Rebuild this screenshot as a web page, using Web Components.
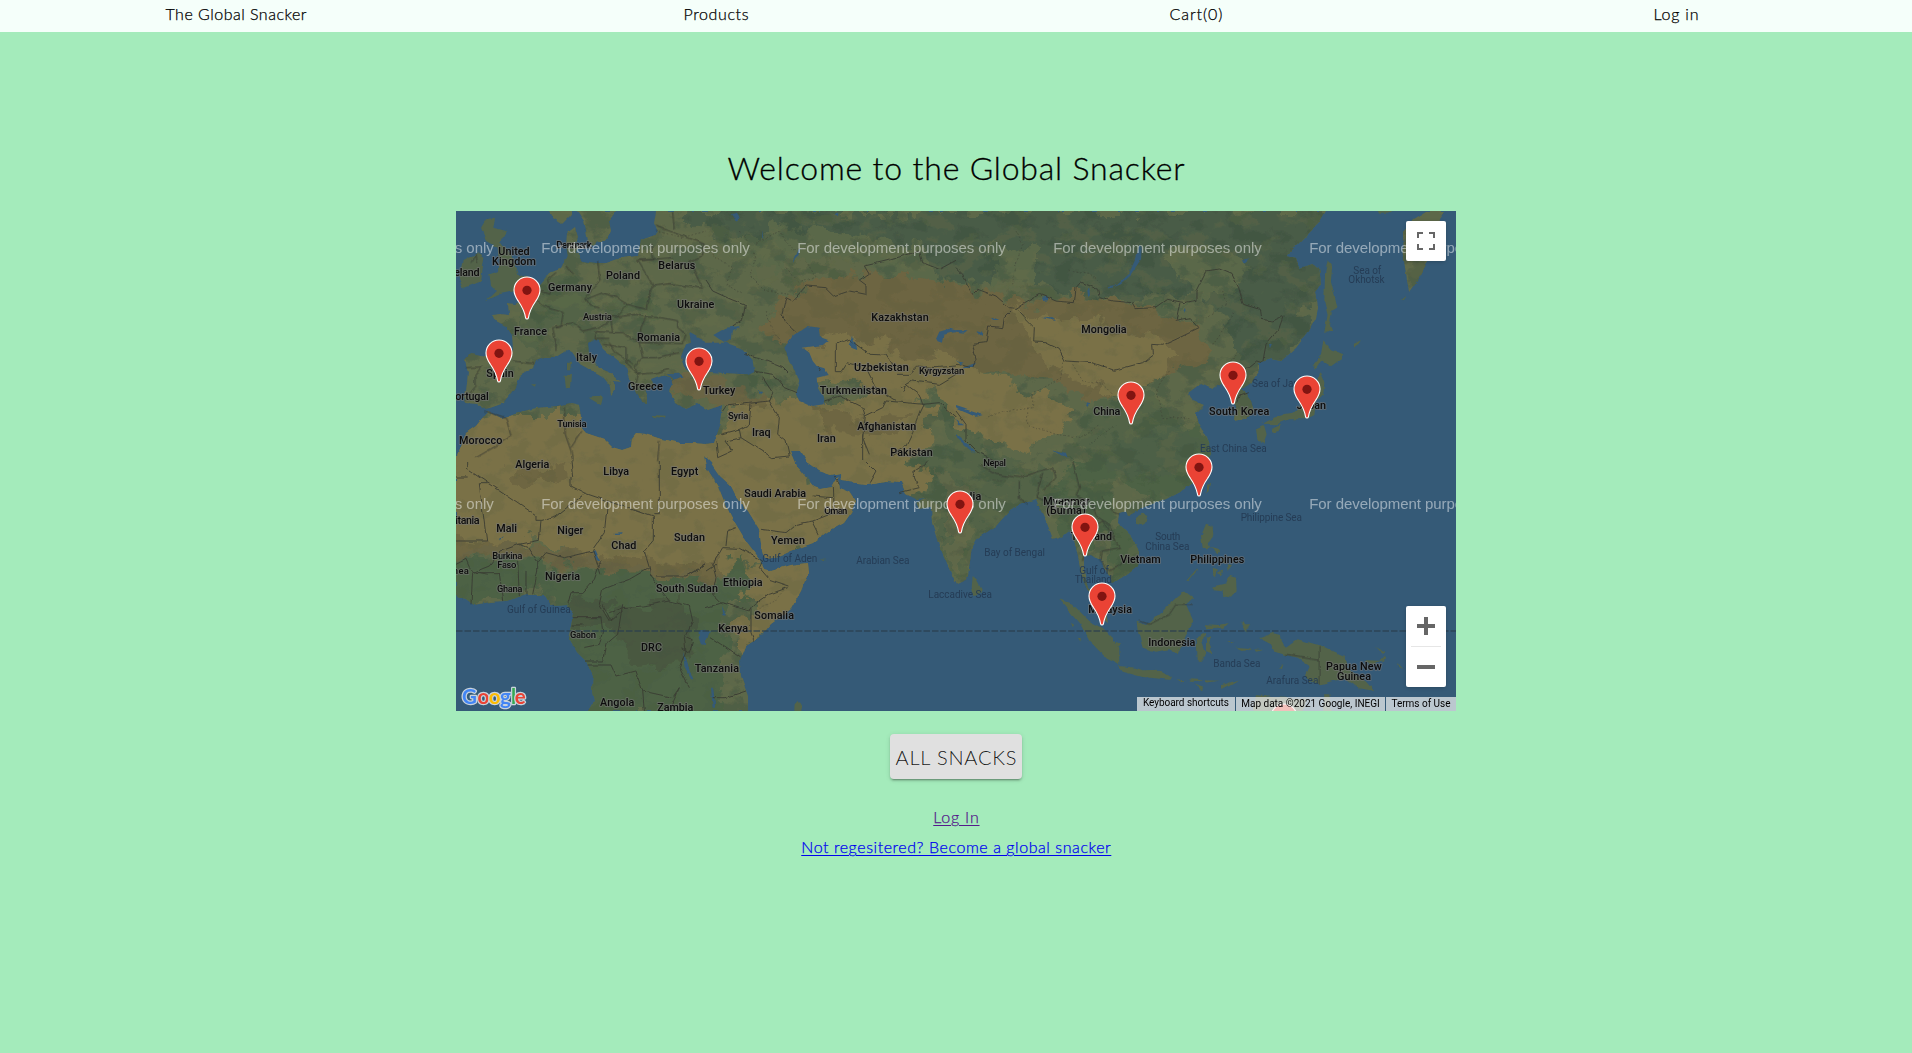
<!DOCTYPE html>
<html lang="en">
<head>
<meta charset="utf-8">
<title>The Global Snacker</title>
<style>
html,body{margin:0;height:100%;overflow:hidden}
body{background:#a4ebbb;font-family:Lato,"Open Sans",sans-serif;font-weight:300;font-size:16px;color:#000}
</style>
</head>
<body>
<snack-app></snack-app>
<script>
/* Text whose tracking is adjusted so that it spans the given width. */
customElements.define('fit-text', class extends HTMLElement {
  connectedCallback() {
    const root = this.attachShadow({mode: 'open'});
    root.innerHTML = '<style>:host{display:inline-block;white-space:nowrap}</style><span></span>';
    const span = root.querySelector('span');
    const text = this.getAttribute('text');
    span.textContent = text;
    const want = +this.getAttribute('span');
    const ls = (want - span.getBoundingClientRect().width) / (text.length - 1);
    span.style.letterSpacing = ls + 'px';
    span.style.marginRight = -ls + 'px';
  }
});

customElements.define('nav-bar', class extends HTMLElement {
  connectedCallback() {
    this.attachShadow({mode: 'open'}).innerHTML = `<style>
      :host{display:block;background:#f5fffa;height:32px;overflow:hidden;-webkit-text-stroke:.25px currentColor}
      nav{display:grid;grid-template-columns:repeat(4,480px);margin-left:-4px;justify-items:center;line-height:20px;padding-top:4px}
    </style><nav><slot></slot></nav>`;
  }
});

customElements.define('snack-button', class extends HTMLElement {
  connectedCallback() {
    this.attachShadow({mode: 'open'}).innerHTML = `<style>
      :host{display:block}
      button{display:flex;align-items:center;justify-content:center;width:132px;height:45px;border:0;padding:0;border-radius:4px;background:#e0e0e0;
        font:300 20px/24px Lato,sans-serif;color:rgba(0,0,0,.9);
        box-shadow:0 3px 1px -2px rgba(0,0,0,.2),0 2px 2px rgba(0,0,0,.14),0 1px 5px rgba(0,0,0,.12)}
    </style><button><slot></slot></button>`;
  }
});

customElements.define('map-pin', class extends HTMLElement {
  connectedCallback() {
    this.style.left = (this.getAttribute('x') - 14.3) + 'px';
    this.style.top = (this.getAttribute('y') - 43) + 'px';
    this.attachShadow({mode: 'open'}).innerHTML = `<style>:host{display:block;position:absolute;width:28px;height:44px}svg{display:block}</style>
      <svg width="28" height="44" viewBox="0 0 28 44"><path d="M14 1A13 13 0 0 0 1 14C1 19 3.200 22 5.500 25.500C9 30.500 11.300 34 12.600 41.800Q12.900 43 14 43Q15.100 43 15.400 41.800C16.700 34 19 30.500 22.500 25.500C24.800 22 27 19 27 14A13 13 0 0 0 14 1Z" fill="#ea4335" stroke="#fff" stroke-width="1.100"/><circle cx="14" cy="14.300" r="4.600" fill="#811411"/></svg>`;
  }
});

customElements.define('map-controls', class extends HTMLElement {
  connectedCallback() {
    this.attachShadow({mode: 'open'}).innerHTML = `<style>
      :host{position:absolute;inset:10px 10px 24px auto;display:flex;flex-direction:column;justify-content:space-between}
      div{background:#fff;border-radius:2px;box-shadow:0 1px 4px -1px rgba(0,0,0,.3);width:40px}
      svg{display:block}
    </style>
    <div><svg width="40" height="40" fill="none" stroke="#666" stroke-width="2"><path d="M12 17V12H17M23 12H28V17M28 23V28H23M17 28H12V23"/></svg></div>
    <div><svg width="40" height="81" fill="none" stroke="#666"><path d="M11 20H29M20 11V29M11 61H29" stroke-width="4"/><path d="M5 40.500H35" stroke="#e6e6e6"/></svg></div>`;
  }
});

customElements.define('map-attribution', class extends HTMLElement {
  connectedCallback() {
    this.attachShadow({mode: 'open'}).innerHTML = `<style>
      :host{position:absolute;right:0;bottom:0;display:flex;height:14px;width:319px;font:400 10px/14px Roboto,sans-serif;color:#000}
      div{background:rgba(245,245,245,.7);text-align:center;flex:none}
      div+div{margin-left:1px}
    </style>
    <div style="width:98px;line-height:12px"><fit-text text="Keyboard shortcuts" span="86"></fit-text></div>
    <div style="width:149px"><fit-text text="Map data ©2021 Google, INEGI" span="138.500"></fit-text></div>
    <div style="width:70px"><fit-text text="Terms of Use" span="59"></fit-text></div>`;
  }
});

/* Terrain, borders and place names. Sheets are 250-unit squares drawn at triple scale. */
const LAND = `M200 0L198 12 202 22 185 28 182 45 165 47 150 52 140 52 125 50 120 44 123 36 119 33 122 26 119 16 111 22 110 34 112 46 108 50 104 58 93 62 87 70 80 78 70 88 60 93 52 92 53 104 45 103 36 104 38 109 50 115 56 124 57 138 52 147 40 147 25 145 14 143 9 149 12 162 10 180 8 192 20 193 27 198 34 197 48 192 56 182 60 176 64 165 77 157 80 149 88 146 100 146 111 139 117 143 122 152 131 157 139 162 146 166 154 176 155 184 160 178 158 170 165 171 155 162 143 157 133 143 132 132 137 128 143 130 147 137 158 147 170 157 173 167 174 175 180 181 186 192 192 193 192 185 189 179 198 176 195 168 206 164 214 166 217 173 213 180 219 191 230 198 242 193 252 199 266 194 264 212 257 232 250 233 235 232 225 232 205 228 190 223 180 222 176 227 175 236 166 239 156 236 148 228 130 222 122 213 126 205 124 194 115 192 100 195 80 197 60 202 45 207 32 200 28 205 20 215 10 222 0 248V384L10 388 18 394 34 391 50 390 70 384 88 384 95 395 110 394 118 402 116 415 113 428 120 440 130 450 137 465 136 480 138 490 132 500H292V485L285 465 284 450 290 435 305 425 315 413 335 398 345 380 352 362 351 352 335 354 315 360 308 358 303 347 290 330 275 305 268 290 262 275 250 256 248 245 255 252 264 265 275 275 280 285 292 300 303 318 306 340 308 347 320 347 335 340 357 332 370 322 388 312 395 302 400 290 394 281 384 277 381 265 375 276 364 278 358 276 348 264 340 254 334 240 345 240 352 252 363 260 375 264 384 262 385 270 410 273 430 270 445 271 450 283 460 288 469 287 460 291 463 298 475 296 476 312 483 335 495 362 501 374 507 371 512 364 516 335 520 328 540 315 555 298 569 292 580 288 585 300 590 310 597 328 607 325 613 320 618 330 622 345 625 365 633 382 637 393 643 405 652 412 650 400 645 388 632 377 628 360 628 345 636 344 645 350 650 360 657 372 668 365 681 355 683 340 675 325 662 312 663 302 670 300 672 305 690 295 710 288 725 280 740 270 750 255 756 240 751 226 743 214 740 203 748 195 736 190 732 182 744 173 751 176 757 178 765 172 771 180 775 188 780 195 779 210 790 207 798 200 795 190 786 178 795 172 803 160 803 152 815 148 825 150 840 137 853 120 860 107 862 97 860 80 865 72 863 57 857 53 843 57 840 48 830 45 843 32 863 12 870 0ZM93 0L97 7 106 13 115 4 115 0ZM121 0L128 10 132 30 136 35 142 31 150 31 155 20 153 10 160 0ZM970 0L957 8 947 20 948 50 953 81 963 67 972 50 980 30 983 7 988 0Z`;
const ISLES = [
 'M90 25L120 20 115 50 150 60 130 95 160 115 185 190 215 200 200 235 130 250 90 268 120 240 105 225 100 190 130 180 125 110 90 90 75 50ZM20 150L65 125 85 140 75 210 20 232 8 200ZM333 455L345 455 342 475 333 475ZM325 495L348 488 345 530 330 532ZM398 560L442 555 435 583ZM585 612L630 614 625 621 590 618ZM355 125L370 125 368 142 355 138ZM225 520L240 520 236 527Z',
 'M300 0L310 0 305 8Z',
 '',
 'M365 148L378 170 375 210 395 290 375 300 370 330 383 360 370 358 355 367 365 310 355 270 357 190ZM352 388L375 415 412 430 400 448 375 466 345 447 327 476 320 460 345 430ZM340 480L355 515 352 550 330 572 325 612 300 625 250 625 215 640 170 638 220 612 260 605 290 575 318 555 332 515ZM150 655L175 645 182 670 172 698 155 692ZM195 650L228 638 218 660 198 666ZM440 400L468 388 460 400 442 407ZM515 0L560 0 545 8 520 8ZM585 265L600 255 590 268ZM415 415L430 410Z',
 '',
 'M265 750L266 730 275 720 288 742 286 750ZM345 292L360 293 355 298ZM300 55L310 48 312 70 302 72Z',
 'M50 345L62 355 78 385 70 402 55 405 47 380ZM310 415L350 430 400 480 440 500 470 530 490 560 490 610 450 590 400 540 375 490 340 450ZM488 615L540 620 560 628 610 626 645 648 640 656 560 648 500 632ZM542 482L570 492 620 450 660 410 685 390 712 410 690 430 712 480 690 520 665 580 640 565 600 572 560 560 545 510ZM722 530L750 515 750 525 735 540 748 575 735 605 725 605ZM540 175L560 155 577 165 572 182 555 193 540 188ZM750 188L735 225 740 260 750 262ZM690 360L725 320 718 335 695 363ZM665 655L690 658 680 664ZM700 655L740 657 730 663 705 662ZM480 540L495 545 490 555 480 550ZM715 670L742 680 738 688ZM345 485L355 492 350 498ZM365 530L375 532 372 540Z',
 'M0 188L20 195 22 225 8 245 12 260 40 268 35 280 15 262 0 265ZM0 70L12 65 8 90 0 100ZM18 380L60 370 72 345 90 350 92 388 72 410 52 405 50 388 22 385ZM20 320L35 325 30 350 22 340ZM45 290L60 295 55 310ZM62 310L78 312 65 330ZM36 335L52 325 45 345ZM0 490L40 492 68 486 55 500 0 502ZM110 478L118 490 130 490 118 505 122 515 108 500ZM0 530L15 525 10 545 22 580 0 570ZM160 532L200 516 222 522 225 545 240 560 275 535 340 553 390 575 418 585 425 615 450 640 480 662 505 690 460 682 420 652 380 660 345 670 305 660 300 640 312 615 275 590 232 580 205 572 195 550ZM90 560L140 565 110 570ZM145 565L170 568 150 572ZM220 620L232 605 228 625ZM45 672L100 655 70 672 45 684ZM0 655L40 656 0 662ZM60 540L85 540 70 544ZM470 600L520 602 540 580 535 600 495 612ZM575 605L592 625 580 618ZM150 702L200 708 300 715 290 750 140 750ZM355 700L370 700 377 750 352 750ZM510 558L535 572 530 578Z'
];
const SEAS = [
 'M750 392L700 365 705 395 690 400 675 440 685 470 700 482 750 490ZM635 490L668 488 680 496 655 506Z',
 'M0 395L60 395 105 412 140 450 145 480 125 490 70 487 0 482ZM22 372L60 350 102 345 80 362 78 385 62 395 40 385ZM235 410L260 375 305 345 338 350 342 378 368 388 350 402 290 410 310 425 320 450 332 465 355 472 368 492 345 497 332 500 335 530 355 565 352 583 320 588 280 570 268 545 280 510 270 480 250 450ZM690 385L700 362 730 353 750 358 750 364 735 365 712 372 708 398 695 394ZM428 400L438 375 446 390 455 415 438 408ZM75 10L90 5 102 25 92 35ZM385 10L398 5 395 18ZM260 152L275 118 280 110 278 135ZM158 540L172 543 165 550ZM168 55L172 85 168 78Z',
 'M458 225L480 222 520 185 540 140 550 105 557 112 555 145 525 190 492 220 462 232ZM258 260L272 256 275 268 262 270ZM394 235L400 230 402 250 396 255ZM0 357L35 358 25 365 0 362ZM58 360L82 365 80 378ZM255 320L300 330 290 322ZM385 575L400 580 394 588ZM102 318L130 330 115 330ZM285 715L330 725 335 740 318 730ZM0 450L20 455 10 460ZM15 472L60 455 50 470ZM0 585L80 612 60 618 0 592ZM0 625L25 640 10 640ZM0 670L30 695 60 725 40 718 0 682ZM683 305L690 290 692 300Z',
 'M108 148L130 138 125 150 112 155ZM188 397L198 395 192 408Z',
 'M408 268L416 265 432 300 425 300ZM728 508L750 506 750 552 735 550 728 530ZM682 570L695 610 712 655 705 655 685 615ZM472 215L500 214 498 218 475 219ZM125 235L140 222 132 238Z',
 'M0 508L15 508 8 530 0 535ZM15 680L22 680 28 740 20 740ZM48 435L60 462 52 465Z','',''
];
const LINES = [
 'M30 470L75 468 60 490 60 525 35 555M168 450L235 458M215 245L260 285 322 305 315 345 290 350 300 395 300 420M250 240L285 250 275 205 300 185M425 150L432 210 390 260 400 285 430 290M390 265L440 245 480 260 515 280 480 318 415 315M515 280L570 295 580 250 592 225 545 148 590 147 585 95M300 345L350 335 380 360 425 350 465 325M465 325L470 365 420 362 418 385 460 385M480 318L540 310 570 318 555 350 550 395 500 365 470 365M550 395L680 398 690 370 665 350 665 330 615 320 570 318M550 395L560 440 600 440 670 425M440 400L510 410 510 460 545 490 535 525M560 440L535 465 545 490 600 485 640 475M460 395L475 420 530 460M592 225L640 218 740 232 700 150 740 135 745 100 640 60 600 45M655 55L650 0M550 148L650 140M85 600L150 620 165 675 120 705 60 740M325 590L328 670 345 720 350 750M345 710L378 660M610 690L605 750M330 165L350 190M45 155L60 130 65 155',
 'M0 210L20 240 75 265 118 282 110 325 80 345M270 365L240 335 228 310 240 260 260 270 300 225 360 230 385 255 430 240 480 250 480 225 460 210 490 190 475 165 540 150 640 120 650 155 700 175 750 148M388 485V400L430 385 490 430 540 432 570 480M388 485L405 485 425 455 480 470 510 530 570 570M345 480L335 465M570 490L610 490 635 465 690 470 750 465M355 570L400 555 470 590 478 615 530 590 540 570 600 575 655 580 645 600 620 665 600 705 555 735M478 615L470 680 490 730M470 670L470 750M115 430L180 450 230 470 250 490M145 480L200 490 235 530 270 545M170 500L200 545 190 570 60 585 50 600M135 580L130 640 100 655 45 670M100 655L105 680 60 690 80 720 35 740 30 690M190 570L220 620 215 670 240 690 250 735 200 740 105 680M590 545L600 520 640 550 650 580 700 575 750 620M585 530L620 510 700 520 750 490',
 'M0 170L20 190 50 250 65 235 120 255 160 290 180 292 250 250 300 270 355 275 360 230 375 213 425 235 430 260 470 270 530 275 540 293 600 290 635 265 685 275 720 268 720 240 750 180M180 292L205 320 235 350 233 393 270 395 310 415 328 450 410 455 475 478 560 455 592 430 590 400 620 403 660 385 728 352 700 320 660 328 672 275M165 300L145 320 140 350 98 345 90 395 50 400 60 445 50 470 0 460M0 600L30 640 30 690 60 720 120 750',
 'M0 180L40 174 78 190 98 230 112 280 160 295 165 325 200 330 232 315 218 355 180 400 170 455 155 450 130 470 100 475M92 575L100 555 125 545',
 'M35 0L35 25 240 165 240 178 255 178 250 238 190 250 135 270 100 315 50 335 45 430M35 48H0M70 68L92 240 0 240M70 68H95M255 178L300 165 388 97 345 75V45M388 97L455 120 592 168V238M350 45L345 0M610 0V158H592M592 238L565 270 580 320 520 355 440 385 430 430 460 480M455 120L445 215 410 265 435 340M190 250L215 260 245 305 245 330 230 400M245 305L270 275 325 290 410 270M210 403L210 330M190 405L185 300M140 420L130 335 60 335M0 310L30 295 45 330 95 340M435 300L415 355 380 395 345 395 335 430M350 470H435L440 510 430 550 382 560M350 492H380M500 430L485 520 450 550 440 600 390 600M460 455L500 440 560 435 640 420 700 435 710 480 685 530 690 570 670 620 700 680M580 320L585 350 640 420M600 345L690 345 750 310M395 612L465 612 480 645 540 630 560 690 650 710 670 680 640 750M440 430L465 480 500 450M690 530L710 540 700 575 680 560M750 310L700 340M560 690L565 750',
 'M0 440L50 425 130 450 140 435 190 400 245 380M50 260L20 310 30 350 20 400 50 430M50 260L100 262 170 300 160 320 190 355 250 375M60 255L65 210 90 200M135 445V515L145 540M15 530L60 560 103 590M165 205L240 215 270 190 320 180 385 155 382 75M320 180L340 220M320 105L378 110M20 710L60 710 120 690M385 45L400 70M480 0L510 30 490 65M580 95L640 80 620 35 650 15 665 0M30 310L0 330',
 'M70 10L120 40 190 50 250 30 290 20M190 60L190 110 215 130M260 35L240 110 270 120M290 20L300 50 260 90M350 0L370 80 360 105 410 125 420 165 460 190 480 240M365 210L385 260 380 300M410 200L440 180 460 210 490 260 435 270 432 300 460 330 490 315 520 280M550 480L580 490 640 460 660 430 710 430M430 400L400 410M440 110L470 150 490 160',
 'M340 555V668M240 580L340 595'
];
const DOTS = [
 'M600 60L680 80 750 60','M100 60L150 140 130 190 180 240 250 250M150 100L220 60 260 120 300 110M20 130L80 170 60 220 110 250M300 150L330 200 280 215 240 170M180 300L200 360 230 400',
 'M180 60L200 100 180 160 170 220M340 180L400 190 430 215M320 455L315 500 260 530 230 545 230 590 130 605 90 620M215 590L215 640 300 670 380 680 430 640M350 460L380 510 440 520 480 560 560 540 600 500M640 480L600 540 620 620 700 620M480 640L400 700',
 'M0 320L60 280 50 240M20 400L90 300M60 470L100 420','','M240 380L205 420 160 440','M0 100L80 100 150 130M110 60L150 60',''
];
/* [text, left, right, baseline, size] */
const NAMES = [
 [['United',127,221,131],['Kingdom',108,240,161],['Ireland',-24,71,196],['Denmark',301,407,110,9.5],['Poland',450,552,203],['Belarus',607,718,173],['Germany',276,408,240],['Austria',381,468,327,9.5],['France',174,273,371],['Romania',543,672,390],['Italy',360,423,450],['Spain',91,173,497],['Greece',516,620,536],['Portugal',-22,98,566],['Tunisia',304,392,648,9.5],['Morocco',9,139,699]],
 [['Ukraine',-87,25,291],['Kazakhstan',496,668,329],['Uzbekistan',444,608,479],['Kyrgyzstan',639,775,489,9.5],['Turkmenistan',341,543,548],['Turkey',-9,88,548],['Syria',66,127,624,9.5],['Iraq',138,194,675],['Iran',333,389,692],['Afghanistan',454,631,656],['Pakistan',553,680,734]],
 [['Mongolia',376,512,365],['China',412,493,612]],
 [['South Korea',9,190,611],['Japan',272,360,593]],
 [['Algeria',178,280,20],['Libya',442,519,41],['Egypt',645,727,41],['Mauritania',-72,71,190],['Mali',121,183,212],['Niger',304,382,218],['Chad',466,541,263],['Sudan',654,747,239],['Burkina',109,199,294,9.5],['Faso',124,181,321,9.5],['Guinea',-55,39,338,9.5],['Nigeria',267,372,357],['Ghana',123,199,393,9.5],['South Sudan',600,786,392],['Gabon',342,420,531,9.5],['DRC',555,618,569],['Angola',432,535,735],['Zambia',604,712,751]],
 [['Saudi Arabia',115,300,107],['Oman',355,424,159,9.5],['Yemen',195,297,248],['Ethiopia',51,170,375],['Somalia',145,264,473],['Kenya',37,126,512],['Tanzania',-34,99,633]],
 [['Nepal',82,150,15,9.5],['India',2,76,118],['Myanmar',262,400,132],['(Burma)',271,389,160],['Thailand',344,468,237],['Vietnam',493,614,306],['Philippines',703,865,306],['Malaysia',397,528,455],['Indonesia',577,718,555]],
 [['Papua New',360,527,626],['Guinea',393,495,657]]
];
const SEANAMES = [
 [],[],[],
 [['Sea of',442,526,190],['Okhotsk',427,536,217],['Sea of Japan',138,312,529],['East China Sea',-18,182,723]],
 [['Gulf of Guinea',153,344,457]],
 [['Gulf of Aden',169,334,304],['Arabian Sea',451,610,309],['Laccadive Sea',667,858,412]],
 [['South',598,673,238],['China Sea',568,700,268],['Bay of Bengal',85,267,286],['Gulf of',370,459,340],['Thailand',356,468,366]],
 [['Philippine Sea',104,288,181],['Banda Sea',22,163,618],['Arafura Sea',181,337,670]]
];
const sheet = (i, s) => `<g transform="translate(${i % 4 * 250} ${i > 3 ? 250 : 0}) scale(.33333)">${s}</g>`;
const sheets = (a, f) => a.map((v, i) => v && v.length ? sheet(i, f(v)) : '').join('');
const words = cls => list => list.map(([t, a, b, y, s = cls === 'n' ? 10.8 : 10]) =>
  `<text class="${cls}" x="${a}" y="${y}" textLength="${b - a}" font-size="${s * 3}">${t}</text>`).join('');
const blob = (c, d, o = 1) => `<path d="${d}" fill="${c}" opacity="${o}"/>`;

customElements.define('world-map', class extends HTMLElement {
  connectedCallback() {
    let marks = '';
    for (const y of [41.6, 297.9]) for (let k = -1; k < 4; k++)
      marks += `<text x="${85.200 + k * 256}" y="${y}" textLength="208.500">For development purposes only</text>`;
    const logo = [['G','#4285f4',0],['o','#ea4335',15.5],['o','#fbbc05',26.700],['g','#4285f4',37.900],['l','#34a853',48.900],['e','#ea4335',52.700]];
    this.attachShadow({mode: 'open'}).innerHTML = `<style>
      :host{display:block;position:relative;width:1000px;height:500px;overflow:hidden;background:#345a77}
      svg{display:block}
      .n{font-family:Roboto,sans-serif;font-weight:500;fill:#0d0d0d;stroke:#777;stroke-opacity:.55;stroke-width:6px;paint-order:stroke;stroke-linejoin:round}
      .s{font-family:Roboto,sans-serif;font-weight:400;fill:#253c55}
      .w{font-family:"Liberation Sans",sans-serif;font-size:15px;fill:#fff;fill-opacity:.48}
      .g{font-family:Lato,sans-serif;font-weight:700;font-size:20.5px}
    </style>
    <svg width="1000" height="500" viewBox="0 0 1000 500">
      <defs>
        <clipPath id="land"><path d="${LAND}"/></clipPath>
        <filter id="rough" x="0" y="0" width="1" height="1" filterUnits="objectBoundingBox"><feTurbulence type="fractalNoise" baseFrequency=".09" numOctaves="3" seed="4"/><feDisplacementMap in="SourceGraphic" scale="4" xChannelSelector="R" yChannelSelector="G"/></filter>
        <filter id="ragged" x="-.1" y="-.1" width="1.2" height="1.2"><feTurbulence type="fractalNoise" baseFrequency=".045" numOctaves="4" seed="9"/><feDisplacementMap in="SourceGraphic" scale="34" xChannelSelector="R" yChannelSelector="G"/></filter>
        <filter id="dark" x="0" y="0" width="1" height="1" color-interpolation-filters="sRGB"><feTurbulence type="fractalNoise" baseFrequency=".04 .055" numOctaves="5" seed="12"/><feColorMatrix values="0 0 0 0 .25  0 0 0 0 .33  0 0 0 0 .26  10 0 0 0 -5.200"/></filter>
        <filter id="light" x="0" y="0" width="1" height="1" color-interpolation-filters="sRGB"><feTurbulence type="fractalNoise" baseFrequency=".04 .06" numOctaves="5" seed="31"/><feColorMatrix values="0 0 0 0 .43  0 0 0 0 .44  0 0 0 0 .29  0 10 0 0 -5.400"/></filter>
      </defs>
      <g filter="url(#rough)">
      <rect width="1000" height="500" fill="#345a77"/>
      <path d="${LAND}" fill="#5d6849"/>
      <g clip-path="url(#land)">
        <g filter="url(#ragged)">
        ${blob('#4a5c46','M225 0H830L900 0 870 70 830 150 790 165 770 110 740 80 660 90 560 70 490 85 380 45 290 60Z')}
        ${blob('#5d6849','M250 30L350 15 470 40 490 70 620 85 540 100 400 90 310 75ZM530 35L580 40 580 80 540 75ZM700 45L760 30 800 60 780 80 740 85Z',.85)}
        ${blob('#4e6245','M590 280L640 240 740 215 760 250 700 300 610 340ZM610 250L660 250 650 400 690 370 690 280Z')}
        ${blob('#4f6247','M440 255L490 230 560 250 590 255 600 290 540 320 515 350 500 370 480 320 475 290ZM640 190L700 185 750 240 700 270 620 240ZM465 180L490 190 540 250 500 235Z',.75)}
        ${blob('#4f6247','M60 80L115 55 140 95 120 110 80 135 60 125ZM145 90L200 95 210 110 170 105ZM270 145L310 155 330 175 290 170ZM640 110L690 90 740 90 660 112Z',.7)}
        </g>
        <rect width="1000" height="500" filter="url(#dark)" opacity=".32"/><rect width="1000" height="500" filter="url(#light)" opacity=".26"/>
        <g filter="url(#ragged)">
        ${blob('#6d6543','M325 88L350 75 420 62 480 70 530 80 585 95 620 82 700 100 745 115 750 150 700 165 640 190 600 170 520 165 480 155 440 165 400 140 340 145 310 120Z')}
        ${blob('#7a7147','M350 130L400 125 450 140 500 150 520 165 620 195 600 225 570 240 520 225 480 180 440 190 400 175 350 170ZM555 90L580 105 640 110 700 125 720 145 700 170 660 182 610 165 575 135ZM-20 215L60 205 130 205 150 225 200 215 260 235 280 190 300 185 380 190 440 180 480 195 460 250 475 270 440 285 400 320 330 350 300 345 290 350 260 362 190 360 140 345 80 332 -20 338Z')}
        ${blob('#6d6543','M-20 328L60 334 145 342 200 352 262 350 262 365 200 372 140 358 60 348 -20 345ZM355 195L410 205 460 210 420 228 380 222ZM60 262L110 255 112 268 70 275ZM215 170L260 170 310 182 310 194 250 192 215 182Z',.9)}
        ${blob('#7a7147','M295 350L360 345 350 390 305 440 285 445 270 420 300 400 280 370Z')}
        ${blob('#4e6245','M-20 350L60 350 150 362 262 368 285 345 292 380 262 410 270 460 260 510 100 510 100 380 -20 400Z')}
        ${blob('#49593f','M155 395L225 390 240 410 225 450 180 455 160 430ZM115 390L150 395 160 412 115 412Z')}
        ${blob('#77704a','M480 260L510 270 520 290 505 360 490 340 490 290Z',.35)}
        </g>
        <rect width="1000" height="500" filter="url(#dark)" opacity=".1"/>
      </g>
      <g fill="#52644a">${sheets(ISLES, d => `<path d="${d}"/>`)}</g>
      <g fill="#345a77">${sheets(SEAS, d => `<path d="${d}"/>`)}</g>
      <g fill="none" stroke="#383a32" stroke-width="3" stroke-linejoin="round" opacity=".85">${sheets(LINES, d => `<path d="${d}"/>`)}</g>
      <g fill="none" stroke="#383a32" stroke-width="2.500" stroke-dasharray="5 6" opacity=".5">${sheets(DOTS, d => d ? `<path d="${d}"/>` : '')}</g>
      </g>
      <path d="M0 420H1000" stroke="#2b3f4f" stroke-width="1.500" stroke-dasharray="6.500 2" opacity=".8"/>
      ${sheets(SEANAMES, words('s'))}
      ${sheets(NAMES, words('n'))}
      <g class="w">${marks}</g>
      <g class="g" transform="translate(6 492.500)" stroke="#c9d3dc" stroke-width="2.500" paint-order="stroke" stroke-linejoin="round">${logo.map(([c, f, x]) => `<text x="${x}" fill="${f}">${c}</text>`).join('')}</g>
    </svg>
    <slot></slot>
    <map-pin x="828.500" y="535"></map-pin>
    <map-controls></map-controls>
    <map-attribution></map-attribution>`;
  }
});

customElements.define('snack-app', class extends HTMLElement {
  connectedCallback() {
    const pins = [[71.5,107.5],[43.5,170.5],[242.8,178.7],[674.8,213.3],[777.5,192.5],[851.5,206.8],[743.5,285],[504.5,321.5],[629.5,344.5],[646.5,413.5]];
    this.attachShadow({mode: 'open'}).innerHTML = `<style>
      :host{display:block}
      main{display:flex;flex-direction:column;align-items:center}
      h1{font-weight:300;font-size:32px;line-height:40px;margin:116px 0 23px;-webkit-text-stroke:.3px currentColor}
      snack-button{margin:23px 0 26px}
      a{line-height:24px;margin-bottom:6px;color:#0000ee;text-underline-offset:2px;-webkit-text-stroke:.25px currentColor}
      a.seen{color:#551a8b}
    </style>
    <nav-bar>
      <fit-text text="The Global Snacker" span="141"></fit-text>
      <fit-text text="Products" span="65"></fit-text>
      <fit-text text="Cart(0)" span="53"></fit-text>
      <fit-text text="Log in" span="45"></fit-text>
    </nav-bar>
    <main>
      <h1><fit-text text="Welcome to the Global Snacker" span="457"></fit-text></h1>
      <world-map>${pins.map(([x, y]) => `<map-pin x="${x}" y="${y}"></map-pin>`).join('')}</world-map>
      <snack-button><fit-text text="ALL SNACKS" span="121"></fit-text></snack-button>
      <a class="seen" href="#"><fit-text style="text-decoration:underline" text="Log In" span="45.500"></fit-text></a>
      <a href="#"><fit-text style="text-decoration:underline" text="Not regesitered? Become a global snacker" span="309.500"></fit-text></a>
    </main>`;
  }
});
</script>
</body>
</html>
